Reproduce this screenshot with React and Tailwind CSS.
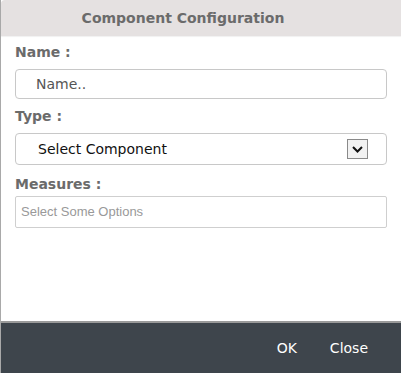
import React from 'react';

const LABEL = 'block h-[18px] leading-[18px] text-[14px] font-bold text-[#6b6b6b]';

function Chevron() {
  return (
    <span className="flex h-[20px] w-[21px] items-center justify-center border border-[#8a8a8a] bg-[#f2f2f2]">
      <svg width="11" height="7" viewBox="0 0 11 7" fill="none">
        <path d="M1 1l4.5 4.5L10 1" stroke="#111" strokeWidth="2" />
      </svg>
    </span>
  );
}

export default function App() {
  return (
    <div
      className="flex h-[373px] w-[401px] flex-col border-l border-[#a9a9a9] bg-white"
      style={{ fontFamily: '"DejaVu Sans", Verdana, sans-serif' }}
    >
      {/* Header */}
      <div className="flex h-[36px] items-center justify-center rounded-tl-[4px] bg-[#e5e1e1] pr-[36px] shadow-[0_1px_1px_rgba(0,0,0,0.06)]">
        <span className="text-[14px] font-bold text-[#6b6b6b]">Component Configuration</span>
      </div>

      {/* Body */}
      <div className="flex-1 pl-[14px] pr-[14px] pt-[7px]">
        <label className={LABEL}>Name :</label>
        <div className="mt-[8px] flex h-[30px] items-center rounded-[4px] border border-[#c8c8c8] pl-[20px] text-[14px] text-[#555]">
          Name..
        </div>

        <label className={`${LABEL} mt-[8px]`}>Type :</label>
        <div className="mt-[8px] flex h-[32px] items-center justify-between rounded-[4px] border border-[#c8c8c8] pl-[22px] pr-[18px] text-[14px] text-[#111]">
          <span>Select Component</span>
          <Chevron />
        </div>

        <label className={`${LABEL} mt-[10px]`}>Measures :</label>
        <div
          className="mt-[3px] flex h-[32px] items-center rounded-[2px] border border-[#cfcfcf] pl-[5px] text-[13px] text-[#999]"
          style={{ fontFamily: '"Liberation Sans", Arial, sans-serif' }}
        >
          Select Some Options
        </div>
      </div>

      {/* Footer */}
      <div className="flex h-[52px] items-center justify-end gap-[33px] border-t-2 border-[#9a9a9a] bg-[#3e454c] pr-[33px] text-[14px] text-white">
        <button>OK</button>
        <button>Close</button>
      </div>
    </div>
  );
}
